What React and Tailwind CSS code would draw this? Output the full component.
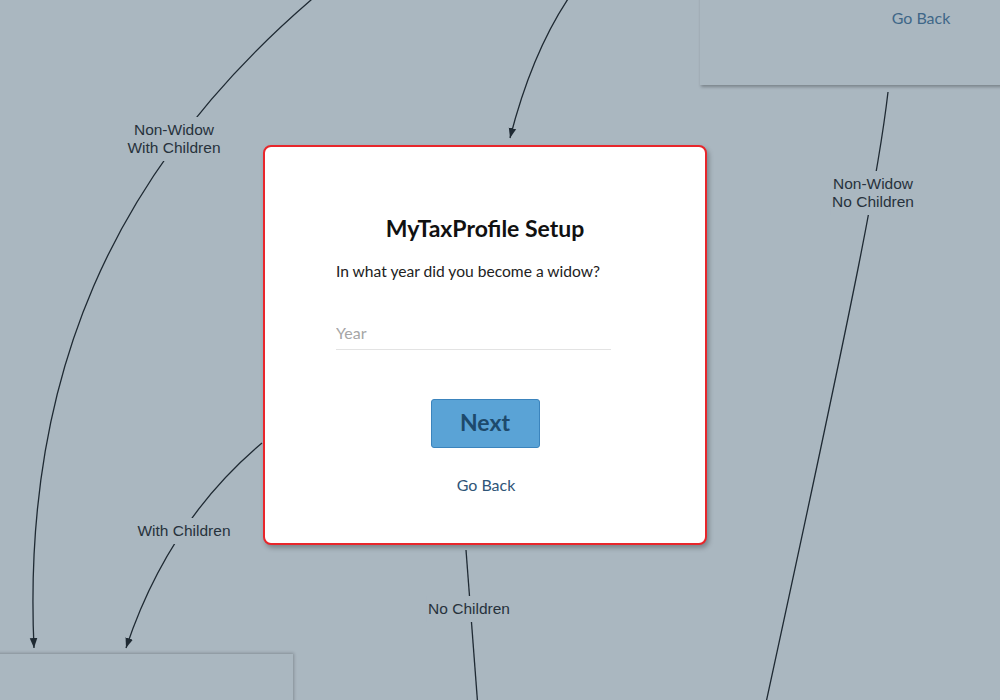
import React from "react";

function EdgeLabel({ x, y, children }) {
  return (
    <div
      className="absolute -translate-x-1/2 -translate-y-1/2 whitespace-nowrap text-center text-[15.5px] leading-[18px] text-[#27323c] px-[2px] py-[4px] bg-[#aab7c0]"
      style={{ left: x, top: y, fontFamily: '"Liberation Sans", Arial, sans-serif' }}
    >
      {children}
    </div>
  );
}

export default function App() {
  return (
    <div
      className="relative w-[1000px] h-[700px] overflow-hidden bg-[#aab7c0]"
      style={{ fontFamily: 'Lato, "Noto Sans", sans-serif' }}
    >
      {/* top-right node */}
      <div className="absolute left-[700px] top-[-120px] w-[320px] h-[205px] bg-[#aab7c0] shadow-[1px_2px_3px_rgba(0,0,0,0.28)] flex flex-col justify-end items-center pb-[55px] pr-[10px]">
        <span className="text-[16px] leading-[24px] text-[#3f6788] pl-[132px]">Go Back</span>
      </div>

      {/* bottom-left node */}
      <div className="absolute left-[-20px] top-[654px] w-[313px] h-[80px] bg-[#aab7c0] shadow-[1px_-1px_3px_rgba(0,0,0,0.22)]" />

      {/* edges */}
      <svg className="absolute inset-0" width="1000" height="700" viewBox="0 0 1000 700">
        <defs>
          <marker id="arr" viewBox="0 0 10 10" refX="10" refY="5" markerWidth="10" markerHeight="10" markerUnits="userSpaceOnUse" orient="auto">
            <path d="M0 1.2 L10 5 L0 8.8 Z" fill="#1f2a33" />
          </marker>
        </defs>
        <g fill="none" stroke="#1f2a33" strokeWidth="1.3">
          <path d="M318 -6 C 110 170, 22 380, 34 648" markerEnd="url(#arr)" />
          <path d="M570 -4 Q 532 52 510 138" markerEnd="url(#arr)" />
          <path d="M888 92 C 879 170, 860 270, 764 712" />
          <path d="M262 443 Q 168 522 126 648" markerEnd="url(#arr)" />
          <path d="M466 550 L 478 708" />
        </g>
      </svg>

      <EdgeLabel x={174} y={139}>
        Non-Widow
        <br />
        With Children
      </EdgeLabel>
      <EdgeLabel x={184} y={531}>With Children</EdgeLabel>
      <EdgeLabel x={469} y={609}>No Children</EdgeLabel>
      <EdgeLabel x={873} y={193}>
        Non-Widow
        <br />
        No Children
      </EdgeLabel>

      {/* modal node */}
      <div className="absolute left-[263px] top-[145px] w-[444px] h-[400px] bg-white border-2 border-[#e8262b] rounded-[8px] shadow-[2px_3px_5px_rgba(0,0,0,0.28)] flex flex-col items-center pt-[67px]">
        <h1 className="text-[23px] leading-[28px] font-bold text-[#111]">MyTaxProfile Setup</h1>
        <div className="w-[300px] flex flex-col mt-[17px] pl-[1px]">
          <p className="text-[15.6px] leading-[24px] text-[#222]">In what year did you become a widow?</p>
          <input
            placeholder="Year"
            className="mt-[33px] w-[275px] h-[34px] border-b-[1.5px] border-[#e3e3e3] outline-none text-[16px] text-[#333] placeholder:text-[#a6a6a6] bg-transparent"
            style={{ fontFamily: 'Lato, "Noto Sans", sans-serif' }}
          />
        </div>
        <button className="mt-[49px] w-[109px] h-[49px] rounded-[3px] bg-[#5aa3d6] border border-[#3b84bd] text-[23px] leading-[28px] font-bold text-[#1d4a6c] pb-[3px]">
          Next
        </button>
        <span className="mt-[25px] pl-[2px] text-[16px] leading-[24px] text-[#2f5578]">Go Back</span>
      </div>
    </div>
  );
}
